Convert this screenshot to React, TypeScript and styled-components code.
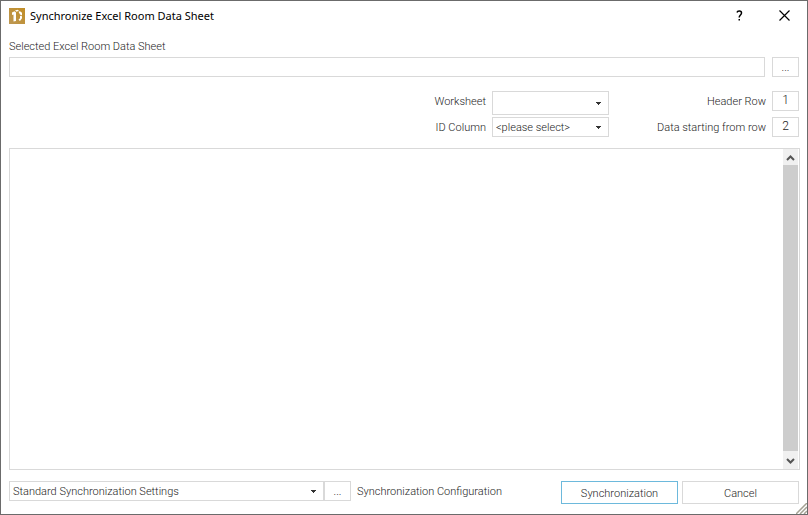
import React from "react";
import styled, { createGlobalStyle } from "styled-components";

const GlobalStyle = createGlobalStyle`
  *, *::before, *::after { box-sizing: border-box; }
  body { margin: 0; background: #fff; }
  button, input, select { font: inherit; color: inherit; border-radius: 0; margin: 0; }
`;

const Dialog = styled.main`
  position: relative;
  display: flex;
  flex-direction: column;
  min-height: 100vh;
  padding: 0 8px 10px;
  border: 1px solid #6b6b6b;
  background: #fff;
  color: #1c1c1c;
  font: 300 11px/14px Roboto, "Liberation Sans", Arial, sans-serif;
`;

const TitleBar = styled.header`
  display: flex;
  align-items: center;
  height: 29px;
  color: #000;
`;

const Title = styled.h1`
  flex: 1;
  margin: 0 0 0 5px;
  font: 400 11px/16px "Noto Sans", "Segoe UI", sans-serif;
`;

const WindowButton = styled.button`
  display: grid;
  place-items: center;
  width: 45px;
  height: 29px;
  padding: 0;
  border: 0;
  background: transparent;

  &:last-child { margin-right: -8px; }
`;

const WindowButtons = styled.div`
  display: flex;
`;

const FileLabel = styled.label`
  margin-top: 10px;
`;

const FileRow = styled.div`
  display: flex;
  gap: 7px;
  margin-top: 3px;
`;

const TextBox = styled.input`
  flex: 1;
  min-width: 0;
  height: 20px;
  padding: 0 3px;
  border: 1px solid #d9d9d9;
  background: #fff;
`;

const BrowseButton = styled.button`
  flex: none;
  width: 27px;
  height: 20px;
  padding: 2px 0 0;
  border: 1px solid #d9d9d9;
  background: #fff;
`;

const Options = styled.section`
  display: grid;
  grid-template-columns: 1fr 117px 151px 27px;
  gap: 2px 6px;
  align-items: start;
  margin-top: 14px;
`;

const OptionLabel = styled.label`
  padding-top: 4px;
  text-align: right;
`;

const RowNumber = styled.input`
  width: 27px;
  height: 20px;
  padding: 0 0 2px;
  border: 1px solid #d9d9d9;
  background: #fff;
  font-size: 12px;
  text-align: center;
`;

const SelectFrame = styled.div<{ $tall?: boolean; $wide?: boolean }>`
  display: grid;
  align-items: center;
  width: ${(p) => (p.$wide ? "calc(40% - 1px)" : "auto")};
  height: ${(p) => (p.$tall ? 24 : 20)}px;

  > * { grid-area: 1 / 1; }
  > svg { justify-self: end; margin-right: 7px; pointer-events: none; }
`;

const Select = styled.select`
  appearance: none;
  width: 100%;
  height: 100%;
  padding: 2px 20px 0 3px;
  border: 1px solid #d9d9d9;
  background: #fff;
`;

const DataPane = styled.section`
  display: flex;
  flex: 1;
  min-height: 80px;
  margin: 11px -1px 11px 0;
  border: 1px solid #d9d9d9;
`;

const DataView = styled.div`
  flex: 1;
`;

const ScrollBar = styled.div`
  display: flex;
  flex-direction: column;
  width: 15px;
  margin-right: 1px;
  background: #f0f0f0;
`;

const ScrollArrow = styled.button`
  display: grid;
  place-items: center;
  height: 17px;
  padding: 0;
  border: 0;
  background: transparent;
`;

const ScrollThumb = styled.div`
  flex: 1;
  margin: -1px 0 1px;
  background: #cdcdcd;
`;

const Footer = styled.footer`
  display: flex;
  align-items: flex-start;
`;

const ConfigLabel = styled.label`
  flex: 1;
  padding: 4px 6px 0;
`;

const Actions = styled.div`
  display: flex;
  gap: 4px;
`;

const ActionButton = styled.button<{ $primary?: boolean }>`
  width: 117px;
  height: 23px;
  padding: 2px 0 0;
  border: 1px solid ${(p) => (p.$primary ? "#6db9dc" : "#d9d9d9")};
  background: #fff;
`;

const Grip = styled.svg`
  position: absolute;
  right: 0;
  bottom: 0;
`;

const AppIcon = () => (
  <svg width="16" height="16" viewBox="0 0 16 16" aria-hidden="true">
    <defs>
      <linearGradient id="gold" x1="0" y1="1" x2="1" y2="0">
        <stop offset="0" stopColor="#bd9855" />
        <stop offset="1" stopColor="#c18d25" />
      </linearGradient>
    </defs>
    <rect width="16" height="16" fill="url(#gold)" />
    <path d="M3 4.500 5.500 3.300 7 4.500V13L4.500 13.500V6.500L3 7Z" fill="#fff" />
    <path d="M6 2.500 8.500 1.800 10 2.800 7.500 3.800ZM9.500 3.800 11 3.300 13 4.800v2.700l-2-1Z" fill="#fff" />
    <path d="M11 7.800 13 8.300v2L11 13l-1.500-1.200 1.500-1.500Z" fill="#fff" />
  </svg>
);

const DropArrow = () => (
  <svg width="7" height="4" viewBox="0 0 7 4" shapeRendering="crispEdges" aria-hidden="true">
    <path d="M1 1h5v1H1ZM2 2h3v1H2ZM3 3h1v1H3Z" fill="#333" />
  </svg>
);

const Chevron = ({ down = false }: { down?: boolean }) => (
  <svg width="9" height="8" viewBox="0 0 9 8" aria-hidden="true">
    <path
      d={down ? "M1 2 4.500 5.500 8 2" : "M1 6 4.500 2.500 8 6"}
      fill="none"
      stroke="#555"
      strokeWidth="2"
    />
  </svg>
);

export default function App() {
  return (
    <>
      <GlobalStyle />
      <Dialog>
        <TitleBar>
          <AppIcon />
          <Title>Synchronize Excel Room Data Sheet</Title>
          <WindowButtons>
            <WindowButton aria-label="Help">
              <svg width="7" height="11" viewBox="0 0 7 11" aria-hidden="true">
                <path
                  d="M1 2.500C1.500 .5 5.500 .5 5.500 3 5.500 5 3.200 5 3.200 7.500"
                  fill="none"
                  stroke="#000"
                  strokeWidth="1.500"
                />
                <path d="M2.500 9h1.500v1.500H2.500Z" />
              </svg>
            </WindowButton>
            <WindowButton aria-label="Close">
              <svg width="11" height="11" viewBox="0 0 11 11" aria-hidden="true">
                <path d="M.5 .5l10 10M10.500 .5l-10 10" stroke="#000" strokeWidth="1.200" />
              </svg>
            </WindowButton>
          </WindowButtons>
        </TitleBar>

        <FileLabel htmlFor="file">Selected Excel Room Data Sheet</FileLabel>
        <FileRow>
          <TextBox id="file" type="text" />
          <BrowseButton aria-label="Browse for file">...</BrowseButton>
        </FileRow>

        <Options>
          <OptionLabel htmlFor="worksheet">Worksheet</OptionLabel>
          <SelectFrame $tall>
            <Select id="worksheet" />
            <DropArrow />
          </SelectFrame>
          <OptionLabel htmlFor="header-row">Header Row</OptionLabel>
          <RowNumber id="header-row" type="text" defaultValue="1" />
          <OptionLabel htmlFor="id-column">ID Column</OptionLabel>
          <SelectFrame>
            <Select id="id-column">
              <option>&lt;please select&gt;</option>
            </Select>
            <DropArrow />
          </SelectFrame>
          <OptionLabel htmlFor="data-row">Data starting from row</OptionLabel>
          <RowNumber id="data-row" type="text" defaultValue="2" />
        </Options>

        <DataPane aria-label="Room data">
          <DataView />
          <ScrollBar>
            <ScrollArrow aria-label="Scroll up">
              <Chevron />
            </ScrollArrow>
            <ScrollThumb />
            <ScrollArrow aria-label="Scroll down">
              <Chevron down />
            </ScrollArrow>
          </ScrollBar>
        </DataPane>

        <Footer>
          <SelectFrame $wide>
            <Select id="settings">
              <option>Standard Synchronization Settings</option>
            </Select>
            <DropArrow />
          </SelectFrame>
          <BrowseButton aria-label="Edit configuration">...</BrowseButton>
          <ConfigLabel htmlFor="settings">Synchronization Configuration</ConfigLabel>
          <Actions>
            <ActionButton $primary>Synchronization</ActionButton>
            <ActionButton>Cancel</ActionButton>
          </Actions>
        </Footer>

        <Grip width="11" height="11" viewBox="0 0 11 11" aria-hidden="true">
          <path d="M0 11 11 0M4 11l7-7M8 11l3-3" stroke="#a5a294" strokeWidth="1.500" />
        </Grip>
      </Dialog>
    </>
  );
}
